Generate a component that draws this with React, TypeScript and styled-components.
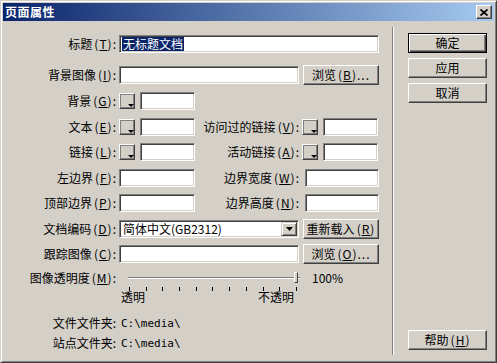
import styled, { createGlobalStyle } from 'styled-components';

const GlobalStyle = createGlobalStyle`
  html, body {
    margin: 0;
    padding: 0;
    background: #d4d0c8;
  }
  body {
    font-family: "Noto Sans CJK SC", "Liberation Sans", sans-serif;
    font-size: 12px;
    color: #000;
  }
`;

function App() {
  return (
    <>
      <GlobalStyle />
      <Window>
        <TitleBar>
          <TitleText>页面属性</TitleText>
          <CloseButton>
            <svg width="8" height="7" viewBox="0 0 8 7">
              <path d="M0.5 0.5 L7.5 6.5 M7.5 0.5 L0.5 6.5" stroke="#000" strokeWidth="1.7" />
            </svg>
          </CloseButton>
        </TitleBar>

        <Body>
          <Main>
            <Row $mt={0}>
              <Label>标题<Key>(<u>T</u>)</Key>:</Label>
              <Field $w={260}>
                <Selected>无标题文档</Selected>
              </Field>
            </Row>

            <Row $mt={12}>
              <Label>背景图像<Key>(<u>I</u>)</Key>:</Label>
              <Field $w={180} />
              <Button $w={76} $ml={4}>浏览<Key>(<u>B</u>)...</Key></Button>
            </Row>

            <Row $mt={7}>
              <Label>背景<Key>(<u>G</u>)</Key>:</Label>
              <Swatch />
              <Field $w={55} $ml={5} />
            </Row>

            <Row $mt={7}>
              <Label>文本<Key>(<u>E</u>)</Key>:</Label>
              <Swatch />
              <Field $w={55} $ml={5} />
              <Label $w={104}>访问过的链接<Key>(<u>V</u>)</Key>:</Label>
              <Swatch />
              <Field $w={55} $ml={5} />
            </Row>

            <Row $mt={6}>
              <Label>链接<Key>(<u>L</u>)</Key>:</Label>
              <Swatch />
              <Field $w={55} $ml={5} />
              <Label $w={104}>活动链接<Key>(<u>A</u>)</Key>:</Label>
              <Swatch />
              <Field $w={55} $ml={5} />
            </Row>

            <Row $mt={7}>
              <Label>左边界<Key>(<u>F</u>)</Key>:</Label>
              <Field $w={76} />
              <Label $w={104}>边界宽度<Key>(<u>W</u>)</Key>:</Label>
              <Field $w={74} $ml={3} />
            </Row>

            <Row $mt={6}>
              <Label>顶部边界<Key>(<u>P</u>)</Key>:</Label>
              <Field $w={76} />
              <Label $w={104}>边界高度<Key>(<u>N</u>)</Key>:</Label>
              <Field $w={74} $ml={3} />
            </Row>

            <Row $mt={7}>
              <Label>文档编码<Key>(<u>D</u>)</Key>:</Label>
              <Select>
                <SelectText>简体中文(GB2312)</SelectText>
                <SelectArrow>
                  <svg width="7" height="4" viewBox="0 0 7 4">
                    <path d="M0 0 H7 L3.5 4 Z" fill="#000" />
                  </svg>
                </SelectArrow>
              </Select>
              <Button $w={76} $ml={4}>重新载入<Key>(<u>R</u>)</Key></Button>
            </Row>

            <Row $mt={6}>
              <Label>跟踪图像<Key>(<u>C</u>)</Key>:</Label>
              <Field $w={180} />
              <Button $w={76} $ml={4}>浏览<Key>(<u>O</u>)...</Key></Button>
            </Row>

            <Row $mt={7} $h={16}>
              <Label>图像透明度<Key>(<u>M</u>)</Key>:</Label>
              <SliderArea>
                <Track />
                <Thumb />
              </SliderArea>
              <Percent>100%</Percent>
            </Row>
            <Ticks>
              {Array.from({ length: 11 }).map((_, i) => (
                <Tick key={i} />
              ))}
            </Ticks>
            <TickLabels>
              <span>透明</span>
              <span>不透明</span>
            </TickLabels>

            <Row $mt={12} $h={16}>
              <Label>文件文件夹:</Label>
              <Path>{'C:\\media\\'}</Path>
            </Row>
            <Row $mt={4} $h={16}>
              <Label>站点文件夹:</Label>
              <Path>{'C:\\media\\'}</Path>
            </Row>
          </Main>

          <Separator />

          <Side>
            <Button $w={79} $h={20} $primary>确定</Button>
            <Button $w={79} $h={20}>应用</Button>
            <Button $w={79} $h={20}>取消</Button>
            <HelpSlot>
              <Button $w={79} $h={20}>帮助<Key>(<u>H</u>)</Key></Button>
            </HelpSlot>
          </Side>
        </Body>
      </Window>
    </>
  );
}

const Window = styled.div`
  width: 497px;
  height: 363px;
  box-sizing: border-box;
  background: #d4d0c8;
  border: 1px solid;
  border-color: #d4d0c8 #404040 #404040 #d4d0c8;
  box-shadow: inset 1px 1px #fff, inset -1px -1px #808080;
  padding: 2px;
  display: flex;
  flex-direction: column;
`;

const TitleBar = styled.div`
  height: 18px;
  flex-shrink: 0;
  display: flex;
  align-items: center;
  justify-content: space-between;
  padding: 0 2px 0 2px;
  background: linear-gradient(to right, #0a246a, #a6caf0);
`;

const TitleText = styled.span`
  color: #fff;
  font-weight: bold;
  font-size: 12px;
  line-height: 18px;
  letter-spacing: 0.5px;
`;

const CloseButton = styled.div`
  width: 16px;
  height: 14px;
  box-sizing: border-box;
  background: #d4d0c8;
  border: 1px solid;
  border-color: #fff #404040 #404040 #fff;
  box-shadow: inset -1px -1px #808080;
  display: flex;
  align-items: center;
  justify-content: center;
`;

const Body = styled.div`
  flex: 1;
  display: flex;
`;

const Main = styled.div`
  width: 389px;
  display: flex;
  flex-direction: column;
  padding-top: 13px;
`;

const Row = styled.div<{ $mt: number; $h?: number }>`
  display: flex;
  align-items: center;
  height: ${(p) => p.$h ?? 19}px;
  margin-top: ${(p) => p.$mt}px;
`;

const Label = styled.span<{ $w?: number }>`
  width: ${(p) => p.$w ?? 113}px;
  margin-right: 3px;
  flex-shrink: 0;
  text-align: right;
  white-space: nowrap;
  line-height: 14px;
`;

const Key = styled.span`
  margin-left: 2px;
  letter-spacing: 1px;
`;

const Field = styled.div<{ $w: number; $ml?: number }>`
  width: ${(p) => p.$w}px;
  height: 18px;
  margin-left: ${(p) => p.$ml ?? 0}px;
  box-sizing: border-box;
  flex-shrink: 0;
  background: #fff;
  border: 1px solid;
  border-color: #808080 #fff #fff #808080;
  box-shadow: inset 1px 1px #404040, inset -1px -1px #d4d0c8;
  display: flex;
  align-items: center;
  padding-left: 2px;
`;

const Selected = styled.span`
  background: #0a246a;
  color: #fff;
  line-height: 14px;
  padding: 0 1px;
`;

const Swatch = styled.div`
  position: relative;
  width: 16px;
  height: 16px;
  box-sizing: border-box;
  flex-shrink: 0;
  background: #d4d0c8;
  border: 1px solid;
  border-color: #fff #404040 #404040 #fff;
  box-shadow: inset 1px 1px #808080, inset -1px -1px #808080;

  &::after {
    content: '';
    position: absolute;
    right: 0;
    bottom: 1px;
    border-left: 3px solid transparent;
    border-right: 3px solid transparent;
    border-top: 3px solid #000;
  }
`;

const Button = styled.div<{ $w: number; $h?: number; $ml?: number; $primary?: boolean }>`
  width: ${(p) => p.$w}px;
  height: ${(p) => p.$h ?? 20}px;
  margin-left: ${(p) => p.$ml ?? 0}px;
  box-sizing: border-box;
  flex-shrink: 0;
  background: #d4d0c8;
  display: flex;
  align-items: center;
  justify-content: center;
  white-space: nowrap;
  line-height: 14px;
  border: 1px solid;
  border-color: ${(p) => (p.$primary ? '#000' : '#fff #404040 #404040 #fff')};
  box-shadow: ${(p) =>
    p.$primary
      ? 'inset 1px 1px #fff, inset -1px -1px #404040, inset -2px -2px #808080'
      : 'inset -1px -1px #808080'};
`;

const Select = styled.div`
  width: 180px;
  height: 18px;
  box-sizing: border-box;
  flex-shrink: 0;
  background: #fff;
  border: 1px solid;
  border-color: #808080 #fff #fff #808080;
  box-shadow: inset 1px 1px #404040, inset -1px -1px #d4d0c8;
  display: flex;
  align-items: center;
  justify-content: space-between;
  padding: 1px 1px 1px 3px;
`;

const SelectText = styled.span`
  line-height: 14px;
`;

const SelectArrow = styled.div`
  width: 16px;
  height: 14px;
  box-sizing: border-box;
  background: #d4d0c8;
  border: 1px solid;
  border-color: #d4d0c8 #404040 #404040 #d4d0c8;
  box-shadow: inset 1px 1px #fff, inset -1px -1px #808080;
  display: flex;
  align-items: center;
  justify-content: center;
`;

const SliderArea = styled.div`
  position: relative;
  width: 181px;
  height: 16px;
  box-sizing: border-box;
  padding-left: 9px;
  display: flex;
  align-items: center;
`;

const Track = styled.div`
  flex: 1;
  height: 2px;
  box-sizing: border-box;
  border-top: 1px solid #808080;
  border-bottom: 1px solid #fff;
`;

const Thumb = styled.div`
  position: absolute;
  right: 2px;
  top: 2px;
  width: 4px;
  height: 11px;
  box-sizing: border-box;
  background: #d4d0c8;
  border: 1px solid;
  border-color: #fff #404040 #404040 #fff;
`;

const Percent = styled.span`
  margin-left: 12px;
  line-height: 14px;
`;

const Ticks = styled.div`
  margin-left: 126px;
  width: 168px;
  height: 4px;
  margin-top: 1px;
  display: flex;
  justify-content: space-between;
`;

const Tick = styled.div`
  width: 1px;
  height: 4px;
  background: #000;
`;

const TickLabels = styled.div`
  margin-left: 118px;
  width: 173px;
  display: flex;
  justify-content: space-between;
  line-height: 12px;
`;

const Path = styled.span`
  font-family: "DejaVu Sans Mono", monospace;
  font-size: 11px;
  margin-left: 2px;
`;

const Separator = styled.div`
  width: 0;
  border-left: 1px solid #808080;
  border-right: 1px solid #fff;
  margin: 6px 0 5px;
`;

const Side = styled.div`
  flex: 1;
  display: flex;
  flex-direction: column;
  gap: 5px;
  padding: 12px 0 10px 14px;
`;

const HelpSlot = styled.div`
  margin-top: auto;
`;

export default App;
